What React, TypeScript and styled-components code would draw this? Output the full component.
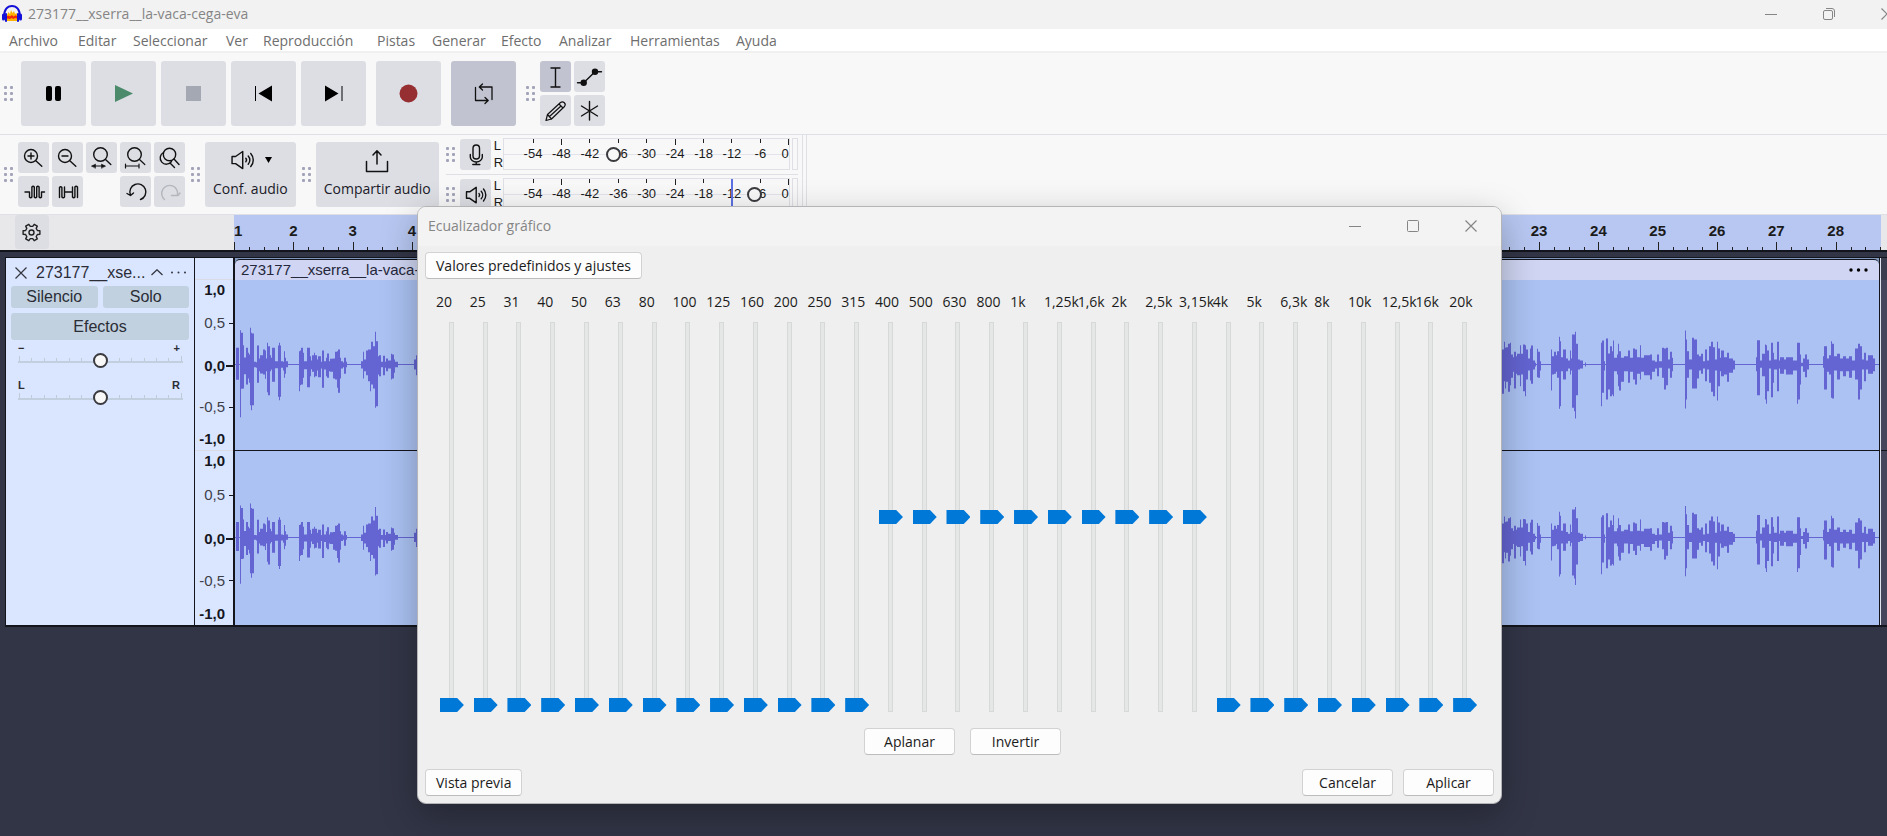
import React, { useState } from 'react';
import styled, { createGlobalStyle, css } from 'styled-components';

const UI = `"Open Sans", "Noto Sans", sans-serif`;
const ARIAL = `"Liberation Sans", Arial, sans-serif`;

const Global = createGlobalStyle`
  *, *::before, *::after { box-sizing: border-box; }
  body { margin: 0; background: #323546; }
  button { font: inherit; color: inherit; border: 0; padding: 0; margin: 0; background: none; }
  svg { display: block; }
`;

const Page = styled.div`
  position: relative;
  display: flex;
  flex-direction: column;
  min-height: 100vh;
  overflow: hidden;
  font-family: ${UI};
  font-size: 14px;
  color: #1b1b1b;
  background: #323546;
`;

/* ---------- window frame ---------- */

const TitleBar = styled.header`
  display: flex;
  align-items: center;
  height: 29px;
  padding: 0 0 2px 2px;
  background: #f2f2f2;
  color: #858585;
  overflow: hidden;
`;
const WindowTitle = styled.h1`
  flex: 1;
  margin: 0 0 0 6px;
  font-size: 14px;
  font-weight: 400;
  line-height: 20px;
  white-space: nowrap;
`;
const WindowButtons = styled.div<{ $bleed?: boolean }>`
  display: flex;
  margin-right: ${(p) => (p.$bleed ? '-29px' : '1px')};
`;
const WindowButton = styled.button`
  display: grid;
  place-items: center;
  width: 58px;
  height: 29px;
`;
const MenuBar = styled.nav`
  display: grid;
  grid-template-columns: 69px 55px 93px 37px 114px 55px 69px 58px 71px 106px 60px;
  height: 24px;
  padding-left: 9px;
  border-bottom: 2px solid #f0f0f0;
  background: #fff;
  color: #6e6e6e;
`;
const MenuItem = styled.button`
  font-size: 14px;
  line-height: 24px;
  text-align: left;
  white-space: nowrap;
`;

/* ---------- toolbars ---------- */

const Toolbar = styled.div<{ $height: number; $gap: number }>`
  display: flex;
  align-items: center;
  gap: ${(p) => p.$gap}px;
  height: ${(p) => p.$height}px;
  padding-left: 4px;
  border-bottom: 1px solid #dfe0e5;
  background: #f8f8f8;
`;
const Group = styled.div<{ $gap: number }>`
  display: flex;
  align-items: center;
  gap: ${(p) => p.$gap}px;
`;
const GripBox = styled.span`
  display: grid;
  grid-template-columns: 3px 3px;
  gap: 3px;
  width: 9px;
  i {
    width: 3px;
    height: 3px;
    border-radius: 1px;
    background: #a3a4b9;
  }
`;
const ToolGrid = styled.div<{ $cols: number }>`
  display: grid;
  grid-template-columns: repeat(${(p) => p.$cols}, 31px);
  grid-auto-rows: 31px;
  gap: 3px;
`;
const face = css<{ $active?: boolean }>`
  border-radius: 3px;
  background: ${(p) => (p.$active ? '#c1c3d0' : '#dddee4')};
`;
const TransportButton = styled.button<{ $active?: boolean }>`
  ${face}
  width: 65px;
  height: 65px;
`;
const ToolButton = styled.button<{ $active?: boolean }>`
  ${face}
  width: 31px;
  height: 31px;
`;
const LabelledButton = styled.button`
  ${face}
  display: flex;
  flex-direction: column;
  align-items: center;
  justify-content: space-between;
  height: 65px;
  padding: 7px 8px 8px;
  font-size: 14px;
  line-height: 20px;
  color: #1a1a28;
  white-space: nowrap;
`;
const IconLine = styled.span`
  display: flex;
  align-items: center;
  gap: 9px;
`;

/* ---------- level meters ---------- */

const Meters = styled.div`
  align-self: stretch;
  display: flex;
  flex-direction: column;
  margin-left: 1px;
  padding-right: 4px;
  border-right: 1px solid #dfe0e5;
  box-shadow: 3px 0 0 #f8f8f8, 4px 0 0 #dfe0e5;
`;
const MeterRow = styled.div`
  display: flex;
  align-items: center;
  flex: 1;
  gap: 5px;
  padding-bottom: 1px;
  & + & { border-top: 1px solid #dfe0e5; }
`;
const MeterBody = styled.div`
  display: flex;
  gap: 2px;
  margin-left: -2px;
`;
const Channels = styled.div`
  display: flex;
  flex-direction: column;
  justify-content: space-between;
  width: 7px;
  height: 32px;
  font-family: ${ARIAL};
  font-size: 13px;
  line-height: 15px;
`;
const MeterScale = styled.div`
  position: relative;
  display: flex;
  width: 287px;
  height: 32px;
  padding-left: 15px;
  border: 1px solid #dfe0e5;
  background: linear-gradient(#e3e4e9, #e3e4e9) 0 15px / 100% 1px no-repeat;
`;
const MeterMark = styled.span<{ $major?: boolean; $end?: boolean }>`
  display: flex;
  flex-direction: column;
  align-items: ${(p) => (p.$end ? 'flex-end' : 'center')};
  flex: ${(p) => (p.$end ? 1 : 2)} 0 0;
  font-family: ${ARIAL};
  font-size: 13px;
  line-height: 18px;
  &::before {
    content: '';
    width: 1px;
    height: ${(p) => (p.$major ? 6 : 4)}px;
    margin-bottom: ${(p) => (p.$major ? 0 : 2)}px;
    background: #222;
  }
`;
const ClipLight = styled.span`
  width: 6px;
  height: 32px;
  border: 1px solid #dfe0e5;
`;
const Peak = styled.span`
  position: absolute;
  top: 0;
  left: 227px;
  width: 2px;
  height: 30px;
  background: #5d70e2;
`;
const knob = css`
  appearance: none;
  width: 15px;
  height: 15px;
  border: 2px solid #3a3a3f;
  border-radius: 50%;
  background: #f8f8f8;
`;
const MeterKnob = styled.input`
  position: absolute;
  inset: 0;
  width: 100%;
  height: 100%;
  margin: 0;
  appearance: none;
  background: transparent;
  &::-webkit-slider-thumb { ${knob} }
`;

/* ---------- timeline ---------- */

const RulerRow = styled.div`
  display: flex;
  height: 37px;
  border-bottom: 2px solid #14151c;
  background: #e8e8ea;
  overflow: hidden;
`;
const RulerHead = styled.div`
  flex: none;
  width: 234px;
  padding-left: 15px;
`;
const GearButton = styled.button`
  ${face}
  width: 34px;
  height: 34px;
`;
const Selection = styled.div`
  flex: 1;
  margin-right: 6px;
  background: #b7c7f1;
`;
const Seconds = styled.div`
  display: grid;
  grid-template-columns: repeat(28, 1fr);
  width: calc(100% + 14px);
  height: 100%;
`;
const Second = styled.div`
  display: flex;
  flex-direction: column;
  justify-content: flex-end;
  font-family: ${ARIAL};
  font-size: 15px;
  font-weight: 700;
  line-height: 20px;
  span {
    width: 24px;
    margin: 0 0 1px -12px;
    text-align: center;
  }
  &:first-child span {
    margin-left: 0;
    text-align: left;
  }
`;
const Quarters = styled.div`
  display: flex;
  align-items: flex-end;
  height: 8px;
  i {
    flex: 1;
    height: 3px;
    border-left: 1px solid #222;
  }
  i:first-child { height: 8px; }
`;

/* ---------- track ---------- */

const Track = styled.section`
  display: flex;
  margin: 5px 0 0 5px;
  border: solid #14151c;
  border-width: 1px 0 2px 1px;
  font-family: ${ARIAL};
`;
const Panel = styled.div`
  flex: none;
  display: flex;
  flex-direction: column;
  gap: 5px;
  width: 189px;
  padding: 6px 5px 0 5px;
  border-right: 1px solid #14151c;
  background: #dae6ff;
  color: #2b2d36;
  font-size: 16px;
`;
const PanelHead = styled.div`
  display: flex;
  align-items: center;
  height: 17px;
  line-height: 18px;
`;
const CloseTrack = styled.button`
  width: 12px;
  margin: 0 9px 0 4px;
`;
const TrackName = styled.span`
  flex: 1;
  white-space: nowrap;
`;
const PanelMenu = styled.button`
  margin-right: 2px;
  & + & { margin-left: 5px; }
`;
const PanelRow = styled.div`
  display: flex;
  gap: 5px;
`;
const PanelButton = styled.button<{ $tall?: boolean }>`
  flex: 1;
  height: ${(p) => (p.$tall ? 27 : 22)}px;
  border-radius: 3px;
  background: #c1d1df;
  line-height: 22px;
`;
const SliderBox = styled.label`
  display: block;
  position: relative;
  margin: -3px 6px 3px 7px;
  height: 32px;
  font-size: 11px;
  line-height: 12px;
`;
const SliderEnds = styled.span`
  display: flex;
  justify-content: space-between;
  padding: 0 3px 0 0;
  font-weight: 700;
`;
const SliderTicks = styled.span`
  display: flex;
  justify-content: space-between;
  height: 7px;
  margin-top: 2px;
  padding: 0 1px;
  border-bottom: 2px solid #c1cfde;
  i {
    width: 1px;
    height: 3px;
    margin-top: 2px;
    background: #c1cbd8;
  }
  i:first-child, i:last-child { height: 5px; margin-top: 0; }
`;
const PanelSlider = styled.input`
  position: absolute;
  left: 0;
  top: 10px;
  width: 100%;
  height: 16px;
  margin: 0;
  appearance: none;
  background: transparent;
  &::-webkit-slider-thumb { ${knob} }
`;
const ScaleColumn = styled.div`
  flex: none;
  width: 40px;
  padding-top: 21px;
  border-right: 2px solid #14151c;
  background: #dae6ff;
`;
const Scale = styled.div<{ $height: number }>`
  display: grid;
  grid-template-rows: 20fr 46fr 40fr 42fr 22fr;
  height: ${(p) => p.$height}px;
  border-top: 1px solid #d9dce6;
`;
const ScaleMark = styled.span<{ $bold?: boolean; $tick: number }>`
  display: flex;
  align-items: center;
  justify-content: flex-end;
  gap: ${(p) => 8 - p.$tick}px;
  font-size: 15px;
  line-height: 18px;
  font-weight: ${(p) => (p.$bold ? 700 : 400)};
  color: ${(p) => (p.$bold ? '#16161e' : '#3d4049')};
  &::after {
    content: '';
    width: ${(p) => p.$tick}px;
    height: ${(p) => (p.$bold ? 2 : 1)}px;
    background: #16161e;
  }
`;
const Clip = styled.div`
  flex: 1;
  min-width: 0;
  padding-top: 1px;
  border-right: 1px solid #14151c;
  background: #7f98bc;
`;
const ClipHead = styled.div`
  display: flex;
  align-items: center;
  justify-content: space-between;
  height: 21px;
  padding: 0 11px 0 6px;
  border-top: 1px solid #14151c;
  border-radius: 5px 5px 0 0;
  background: #cfd5f2;
  font-size: 15px;
  line-height: 20px;
  color: #25273a;
`;
const WaveBox = styled.div<{ $height: number }>`
  height: ${(p) => p.$height}px;
  overflow: hidden;
  background: #abc2f2;
  & + & { border-top: 1px solid #14151c; }
`;
const Tail = styled.div`
  flex: none;
  width: 7px;
  border-left: 1px solid #dfe3f0;
  background: linear-gradient(#14151c, #14151c) 0 192px / 100% 1px no-repeat,
    linear-gradient(#3c3e50 22px, #45465c 22px);
`;

/* ---------- equalizer dialog ---------- */

const Dialog = styled.section`
  position: absolute;
  left: 417px;
  top: 206px;
  width: 1085px;
  border: 1px solid #b4b4b6;
  border-radius: 9px;
  background: #efefef;
  box-shadow: 0 12px 36px rgba(0, 0, 0, 0.28);
  overflow: hidden;
`;
const DialogTitle = styled.header`
  display: flex;
  align-items: center;
  justify-content: space-between;
  height: 39px;
  padding: 0 0 2px 10px;
  background: #f3f3f3;
  color: #858585;
  h2 {
    margin: 0;
    font-size: 14px;
    font-weight: 400;
    line-height: 20px;
  }
`;
const DialogBody = styled.div`
  display: flex;
  flex-direction: column;
  padding: 6px 7px 7px;
`;
const PushButton = styled.button<{ $fit?: boolean }>`
  height: 27px;
  ${(p) => (p.$fit ? 'padding: 0 10px; align-self: flex-start;' : 'width: 91px;')}
  border: 1px solid #d2d2d2;
  border-bottom-color: #bcbcbc;
  border-radius: 4px;
  background: #fdfdfd;
  font-size: 14px;
  line-height: 24px;
  white-space: nowrap;
`;
const Bands = styled.div`
  display: grid;
  grid-template-columns: repeat(31, 1fr);
  margin: 13px 12px 0 10px;
`;
const Band = styled.label`
  display: flex;
  flex-direction: column;
  min-width: 0;
  font-size: 14px;
  line-height: 20px;
  white-space: nowrap;
  span { padding-left: 1px; }
`;
const BandSlider = styled.input`
  align-self: center;
  writing-mode: vertical-lr;
  direction: rtl;
  appearance: none;
  width: 24px;
  height: 390px;
  margin: 10px 0 0;
  background: transparent;
  &::-webkit-slider-runnable-track {
    width: 24px;
    height: 100%;
    background:
      linear-gradient(#e4e7e6, #e4e7e6) 10px 1px / 3px 388px no-repeat,
      linear-gradient(#d6d9d8, #d6d9d8) 9px 0 / 5px 100% no-repeat;
  }
  &::-webkit-slider-thumb {
    appearance: none;
    width: 24px;
    height: 14px;
    background: #0078d7;
    clip-path: polygon(0 0, 72% 0, 100% 50%, 72% 100%, 0 100%);
  }
`;
const CurveActions = styled.div`
  display: flex;
  justify-content: center;
  gap: 15px;
  margin: 16px 0 14px 6px;
`;
const DialogActions = styled.div`
  display: flex;
  gap: 10px;
  button:first-child { margin-right: auto; }
`;

/* ---------- icons ---------- */

const Icon = ({ size = 31, color = '#111', w = 1.4, children }: {
  size?: number; color?: string; w?: number; children: React.ReactNode;
}) => (
  <svg width={size} height={size} viewBox={`0 0 ${size} ${size}`} fill="none" stroke={color} strokeWidth={w}
    strokeLinecap="round" strokeLinejoin="round" aria-hidden="true">
    {children}
  </svg>
);

const speaker = (
  <>
    <path d="M6.500 12.800h3.200l6.500-4.500v15.500l-6.500-4.500H6.500z" />
    <path d="M19 14.500a2.200 2.200 0 0 1 0 3M21.200 12.300a5.500 5.500 0 0 1 0 7.500M23.500 10a9 9 0 0 1 0 12" />
  </>
);

const gearPath = () => {
  const pts: string[] = [];
  for (let i = 0; i < 6; i++) {
    [[-19, 6.2], [-12, 8.6], [12, 8.6], [19, 6.2]].forEach(([a, r]) => {
      const t = ((i * 60 + a) * Math.PI) / 180;
      pts.push(`${(16.5 + r * Math.cos(t)).toFixed(1)} ${(16.5 + r * Math.sin(t)).toFixed(1)}`);
    });
  }
  return `M${pts.join('L')}Z`;
};

const Logo = () => (
  <svg width="20" height="20" viewBox="0 0 20 20" aria-hidden="true">
    <path d="M4.500 17v-5l2-4 1.500 2 1-4 1.500 3 1.500-2 1 3 1.500-1L15.500 12v5z" fill="#ffb300" />
    <path d="M4.500 12.500l2-1 1.500 1 2-1.500 1.500 1.500 2-1.200 2 1.200-.500 2-2-.500-1.500 1-2-1-1.500 1-3-.500z" fill="#f4260c" />
    <path d="M2.300 12.500C1.800 5.500 5.500 2 10 2s8.200 3.500 7.700 10.500" fill="none" stroke="#1410d8" strokeWidth="2" />
    <rect x="0" y="9.500" width="3" height="7" rx="1.500" fill="#1410d8" />
    <rect x="17" y="9.500" width="3" height="7" rx="1.500" fill="#1410d8" />
    <rect x="3" y="9" width="2" height="9" rx="1" fill="#1410d8" />
    <rect x="15" y="9" width="2" height="9" rx="1" fill="#1410d8" />
  </svg>
);

const Minimize = () => (
  <svg width="12" height="12" stroke="#858585" fill="none"><path d="M0 6.500h12" /></svg>
);
const Cross = ({ color = '#858585' }: { color?: string }) => (
  <svg width="12" height="12" stroke={color} fill="none" strokeWidth="1.200"><path d="M.5.5l11 11M11.500.5l-11 11" /></svg>
);

const Grip = () => (
  <GripBox aria-hidden="true"><i /><i /><i /><i /><i /><i /></GripBox>
);

/* ---------- data ---------- */

const MENU = ['Archivo', 'Editar', 'Seleccionar', 'Ver', 'Reproducción', 'Pistas', 'Generar', 'Efecto', 'Analizar', 'Herramientas', 'Ayuda'];
const DB = ['-54', '-48', '-42', '-36', '-30', '-24', '-18', '-12', '-6', '0'];
const BANDS = ['20', '25', '31', '40', '50', '63', '80', '100', '125', '160', '200', '250', '315', '400', '500', '630', '800', '1k',
  '1,25k', '1,6k', '2k', '2,5k', '3,15k', '4k', '5k', '6,3k', '8k', '10k', '12,5k', '16k', '20k'];

/* Peaks as start, end, height above and depth below the axis, in thirds of a pixel. */
const OPENING = '33 41 50 46,45 49 103 158,49 53 95 73,53 56 58 72,56 64 21 29,64 68 50 60,68 71 35 42,71 75 30 55,75 79 110 122,79 82 95 137,82 86 93 122,86 92 8 8,92 97 7 10,97 101 57 55,101 105 18 20,105 115 28 27,115 119 45 30,119 123 42 43,123 126 18 20,126 130 65 83,130 134 55 92,134 138 28 20,138 142 20 15,142 149 50 52,149 158 10 11,158 162 57 97,162 166 65 107,166 169 57 97,169 175 10 10,175 177 8 18,177 181 40 40,181 184 20 28,184 188 10 8,221 225 40 80,225 229 42 62,229 235 50 60,235 238 35 40,238 247 10 14,247 254 50 68,254 257 25 35,257 261 12 14,261 266 28 22,266 271 35 38,271 275 28 35,275 280 15 18,280 287 25 38,287 292 8 12,292 297 42 70,297 302 10 15,302 306 20 35,306 311 33 40,311 316 10 20,316 324 17 22,324 330 18 42,330 335 38 45,335 339 40 70,339 345 45 85,345 349 20 42,349 354 10 12,354 357 6 8,357 362 20 28,362 367 8 8,409 413 10 12,413 417 38 42,417 423 15 20,423 428 42 32,428 435 45 50,435 439 45 80,439 443 68 60,443 449 55 72,449 453 98 130,453 458 70 125,458 462 25 30,462 469 28 35,469 473 8 8,473 480 26 32,480 484 8 10,484 490 18 20,490 497 12 12,497 502 32 45,502 507 30 42,507 511 15 25,511 518 8 8,566 572 15 15,572 580 28 32';
const ENDING = '60 67 40 60,67 71 45 88,71 75 68 50,75 79 50 72,79 83 52 52,83 91 62 82,91 94 65 62,94 98 30 40,98 102 22 22,102 107 38 72,107 112 25 28,112 120 32 32,120 124 58 65,124 130 32 30,130 134 60 80,134 139 58 95,139 145 45 45,145 149 18 18,149 153 48 48,153 159 57 58,159 164 12 15,164 168 5 6,171 175 47 38,175 179 38 40,179 184 10 18,213 217 45 78,217 222 25 30,222 228 38 28,228 232 28 22,232 236 40 40,236 240 83 133,240 244 70 125,244 250 22 20,250 257 45 45,257 263 18 20,263 270 12 12,270 274 42 30,274 277 18 18,277 281 90 130,281 285 90 140,285 289 98 162,289 293 62 92,293 300 15 15,300 308 12 12,315 318 6 6,363 367 65 125,367 371 72 85,371 375 10 18,377 383 78 105,383 389 33 75,389 395 55 95,395 399 40 90,399 403 72 95,403 410 20 20,410 415 30 30,415 418 62 65,418 424 40 78,424 431 20 52,431 445 25 20,445 449 42 55,449 460 20 22,460 466 48 45,466 471 45 60,471 479 22 28,479 484 58 45,484 492 20 22,492 510 28 32,510 517 30 45,517 524 12 22,524 532 8 12,532 537 30 35,537 546 10 10,546 551 50 40,551 557 48 75,557 565 50 62,565 569 15 12,569 575 38 40,575 580 20 20,614 618 102 132,618 622 75 105,622 626 40 40,626 637 15 15,637 642 80 72,642 650 75 72,650 656 30 42,656 662 25 18,662 670 32 28,670 675 10 12,675 681 45 50,681 686 12 15,686 692 55 55,692 699 68 82,699 706 52 95,706 711 15 18,711 715 68 108,715 719 48 65,719 724 20 20,724 732 42 35,732 740 22 30,740 748 35 52,748 758 18 25,758 765 12 15,828 832 22 20,832 839 73 92,839 846 12 10,846 854 32 35,854 858 60 105,858 862 58 118,862 867 42 80,867 874 12 12,874 878 65 98,878 882 35 55,882 890 15 15,890 896 68 80,896 901 12 12,901 911 22 28,911 918 15 15,918 938 22 30,938 951 12 18,951 955 65 118,955 959 65 105,959 964 30 60,964 970 5 5,970 976 18 22,976 981 30 38,981 986 15 15,1029 1033 25 10,1033 1041 55 75,1041 1046 18 22,1046 1053 28 30,1053 1057 70 100,1057 1062 62 102,1062 1072 25 18,1072 1079 32 45,1079 1090 18 20,1090 1098 25 35,1098 1108 18 20,1108 1115 25 40,1115 1124 12 18,1124 1134 48 45,1134 1140 62 105,1140 1146 55 75,1146 1151 15 15,1151 1157 35 50,1157 1165 12 15,1165 1178 28 28,1178 1184 18 20';

const peaks = (data: string, origin: number, axis: number, up: number, down: number) =>
  data.split(',').map((seg) => {
    const [a, b, u, d] = seg.split(' ').map(Number);
    const x0 = Math.round(origin + a / 3);
    const x1 = Math.max(x0 + 1, Math.round(origin + b / 3));
    return `M${x0} ${(axis - (u * up) / 3).toFixed(1)}H${x1}V${(axis + (d * down) / 3).toFixed(1)}H${x0}Z`;
  }).join('');

const Wave = ({ axis, up = 1, down = 1 }: { axis: number; up?: number; down?: number }) => (
  <svg width="100%" height="100%" aria-hidden="true">
    <rect x="0" y={axis - 0.5} width="100%" height="1" fill="#6464d2" />
    <path d={peaks(OPENING, -10, axis, up, down) + peaks(ENDING, 1245, axis, up, down)} fill="#6464d2" />
  </svg>
);

/* ---------- composed parts ---------- */

const Meter = ({ label, level, peak, icon }: { label: string; level: number; peak?: boolean; icon: React.ReactNode }) => (
  <MeterRow>
    <Grip />
    <ToolButton aria-label={label}><Icon>{icon}</Icon></ToolButton>
    <MeterBody>
      <Channels><span>L</span><span>R</span></Channels>
      <MeterScale>
        {DB.map((d) => (
          <MeterMark key={d} $major={['-48', '-24', '0'].includes(d)} $end={d === '0'}>{d}</MeterMark>
        ))}
        {peak && <Peak />}
        <MeterKnob type="range" aria-label={`Nivel: ${label}`} min={0} max={1000} defaultValue={level} />
      </MeterScale>
      <ClipLight />
    </MeterBody>
  </MeterRow>
);

const TrackSlider = ({ name, low, high }: { name: string; low: string; high: string }) => (
  <SliderBox>
    <SliderEnds><span>{low}</span><span>{high}</span></SliderEnds>
    <SliderTicks>{Array.from({ length: 14 }, (_, i) => <i key={i} />)}</SliderTicks>
    <PanelSlider type="range" aria-label={name} defaultValue={50} />
  </SliderBox>
);

const VerticalScale = ({ height }: { height: number }) => (
  <Scale $height={height}>
    <ScaleMark $bold $tick={0}>1,0</ScaleMark>
    <ScaleMark $tick={4}>0,5</ScaleMark>
    <ScaleMark $bold $tick={7}>0,0</ScaleMark>
    <ScaleMark $tick={4}>-0,5</ScaleMark>
    <ScaleMark $bold $tick={0}>-1,0</ScaleMark>
  </Scale>
);

const Equalizer = () => {
  const [gains, setGains] = useState(() => BANDS.map((_, i) => (i >= 13 && i <= 22 ? 0 : -20)));
  return (
    <Dialog role="dialog" aria-labelledby="eq-title">
      <DialogTitle>
        <h2 id="eq-title">Ecualizador gráfico</h2>
        <WindowButtons>
          <WindowButton aria-label="Minimizar"><Minimize /></WindowButton>
          <WindowButton aria-label="Maximizar">
            <svg width="12" height="12" fill="none" stroke="#858585"><rect x=".5" y=".5" width="11" height="11" rx="1" /></svg>
          </WindowButton>
          <WindowButton aria-label="Cerrar"><Cross /></WindowButton>
        </WindowButtons>
      </DialogTitle>
      <DialogBody>
        <PushButton $fit>Valores predefinidos y ajustes</PushButton>
        <Bands>
          {BANDS.map((b, i) => (
            <Band key={b}>
              <span>{b}</span>
              <BandSlider type="range" min={-20} max={20} value={gains[i]}
                onChange={(e) => setGains(gains.map((g, j) => (j === i ? Number(e.target.value) : g)))} />
            </Band>
          ))}
        </Bands>
        <CurveActions>
          <PushButton onClick={() => setGains(gains.map(() => 0))}>Aplanar</PushButton>
          <PushButton onClick={() => setGains(gains.map((g) => -g))}>Invertir</PushButton>
        </CurveActions>
        <DialogActions>
          <PushButton $fit>Vista previa</PushButton>
          <PushButton>Cancelar</PushButton>
          <PushButton>Aplicar</PushButton>
        </DialogActions>
      </DialogBody>
    </Dialog>
  );
};

export default function App() {
  return (
    <>
      <Global />
      <Page>
        <TitleBar>
          <Logo />
          <WindowTitle>273177__xserra__la-vaca-cega-eva</WindowTitle>
          <WindowButtons $bleed>
            <WindowButton aria-label="Minimizar"><Minimize /></WindowButton>
            <WindowButton aria-label="Restaurar">
              <svg width="12" height="12" fill="none" stroke="#858585">
                <rect x=".5" y="2.500" width="9" height="9" rx="1.500" />
                <path d="M3 .5h6a2.500 2.500 0 0 1 2.500 2.500v6" />
              </svg>
            </WindowButton>
            <WindowButton aria-label="Cerrar"><Cross /></WindowButton>
          </WindowButtons>
        </TitleBar>

        <MenuBar>{MENU.map((m) => <MenuItem key={m}>{m}</MenuItem>)}</MenuBar>

        <Toolbar $height={82} $gap={10}>
          <Group $gap={8}>
            <Grip />
            <Group $gap={10}>
              <Group $gap={5}>
                <TransportButton aria-label="Pausa">
                  <svg width="65" height="65"><rect x="25" y="25" width="6" height="15" rx="2" /><rect x="34" y="25" width="6" height="15" rx="2" /></svg>
                </TransportButton>
                <TransportButton aria-label="Reproducir">
                  <svg width="65" height="65"><path d="M24 24L42 32.500 24 41z" fill="#4b8a6a" /></svg>
                </TransportButton>
                <TransportButton aria-label="Detener">
                  <svg width="65" height="65"><rect x="25" y="25" width="15" height="15" fill="#a4a8b2" /></svg>
                </TransportButton>
                <TransportButton aria-label="Ir al inicio">
                  <svg width="65" height="65"><path d="M24 25h1v15h-1zM41 24.500v16L27.500 32.500z" /></svg>
                </TransportButton>
                <TransportButton aria-label="Ir al final">
                  <svg width="65" height="65"><path d="M40.500 25h1v15h-1zM24 24.500v16L37.500 32.500z" /></svg>
                </TransportButton>
              </Group>
              <TransportButton aria-label="Grabar">
                <svg width="65" height="65"><circle cx="32.500" cy="32.500" r="9" fill="#952f31" /></svg>
              </TransportButton>
              <TransportButton $active aria-label="Bucle">
                <Icon size={65} w={1.3}>
                  <path d="M24.500 26.500V39.500H37M34 36.500l3.200 3L34 42.500M41 38.500V26H28.500M31.500 23l-3.200 3 3.200 3" />
                </Icon>
              </TransportButton>
            </Group>
          </Group>
          <Group $gap={5}>
            <Grip />
            <ToolGrid $cols={2}>
              <ToolButton $active aria-label="Selección"><Icon><path d="M11 7h9M15.500 7v19M11 26h9" /></Icon></ToolButton>
              <ToolButton aria-label="Envolvente">
                <Icon>
                  <path d="M3.500 21.700h6.200L21 10.700h6.500" />
                  <circle cx="9.700" cy="21.700" r="2.500" fill="#111" /><circle cx="21" cy="10.700" r="2.500" fill="#111" />
                </Icon>
              </ToolButton>
              <ToolButton aria-label="Dibujo">
                <Icon w={1.2}><path d="M6 25.500l1.500-6L20.500 7.500q2-1.500 3.800.2t.2 3.800L11.500 24zM7.500 19.500l4 4.500M19 9l4 4M9.500 21.500L21 11" /></Icon>
              </ToolButton>
              <ToolButton aria-label="Multiherramienta"><Icon><path d="M15.500 6.500v18.500M7.500 11l16 10M23.500 11l-16 10" /></Icon></ToolButton>
            </ToolGrid>
          </Group>
        </Toolbar>

        <Toolbar $height={80} $gap={6}>
          <Group $gap={5}>
            <Grip />
            <ToolGrid $cols={5}>
              <ToolButton aria-label="Acercar"><Icon><circle cx="13" cy="14" r="6.500" /><path d="M10 14h6M13 11v6M17.800 18.800l6 5.500" /></Icon></ToolButton>
              <ToolButton aria-label="Alejar"><Icon><circle cx="13" cy="14" r="6.500" /><path d="M10 14h6M17.800 18.800l6 5.500" /></Icon></ToolButton>
              <ToolButton aria-label="Ajustar la selección">
                <Icon>
                  <circle cx="14.500" cy="12.500" r="6.800" /><path d="M19.500 17.500l5.300 5" />
                  <path d="M6 24h13" strokeWidth="1.200" />
                  <path d="M6 24l3.500-2v4zM19 24l-3.500-2v4z" strokeWidth="0.500" fill="#111" />
                </Icon>
              </ToolButton>
              <ToolButton aria-label="Ajustar el proyecto">
                <Icon><circle cx="14.500" cy="12.500" r="6.800" /><path d="M19.500 17.500l5.300 5M5.500 24h13.500M5.500 22v4M19 22v4" strokeWidth="1.200" /></Icon>
              </ToolButton>
              <ToolButton aria-label="Alternar zoom">
                <Icon><circle cx="15.500" cy="12.500" r="6.200" /><path d="M20 17l5 5.500M9.500 10.500a6.200 6.200 0 1 0 8 9M16 21l4.500 4.500" /></Icon>
              </ToolButton>
              <ToolButton aria-label="Recortar">
                <Icon><path d="M7 16h4.500v5q1.200 1.500 2.400 0v-10q1.200-1.500 2.400 0v10q1.200 1.500 2.400 0v-10q1.200-1.500 2.400 0v10q1.200 1.500 2.400 0V16h3" /></Icon>
              </ToolButton>
              <ToolButton aria-label="Silenciar">
                <Icon><path d="M7.500 21.500v-10q1.200-1.500 2.400 0v9.500q1.200 1.500 2.600 0v-10M12.500 16h8M20.500 11v10q1.200 1.500 2.400 0v-10q1.200-1.500 2.600 0v10.500" /></Icon>
              </ToolButton>
              <span />
              <ToolButton aria-label="Deshacer"><Icon><path d="M20.500 23.500A8 8 0 1 0 10.500 19M7 17.500l3.500 2 3-2.500" /></Icon></ToolButton>
              <ToolButton aria-label="Rehacer"><Icon color="#b3b6bd"><path d="M10.500 23.500A8 8 0 1 1 23.500 19M17.500 19.500h6.500l2-2.500" /></Icon></ToolButton>
            </ToolGrid>
          </Group>
          <Group $gap={5}>
            <Grip />
            <LabelledButton>
              <IconLine>
                <svg width="27" height="22" viewBox="5.500 6 21 20" fill="none" stroke="#111" strokeWidth="1.300" strokeLinejoin="round" strokeLinecap="round">{speaker}</svg>
                <svg width="7" height="6"><path d="M0 0h7L3.500 6z" /></svg>
              </IconLine>
              Conf. audio
            </LabelledButton>
          </Group>
          <Group $gap={5}>
            <Grip />
            <LabelledButton>
              <svg width="24" height="24" fill="none" stroke="#111" strokeWidth="1.500" strokeLinecap="round" strokeLinejoin="round">
                <path d="M1.500 12.500v10h21v-10M12 15V2M8 6l4-4.200L16 6" />
              </svg>
              Compartir audio
            </LabelledButton>
          </Group>
          <Meters>
            <Meter label="Grabación" level={379}
              icon={<><rect x="13" y="6" width="6.500" height="14" rx="3.200" /><path d="M10.300 15.500v2.500a6 5 0 0 0 12 0v-2.500M16.200 23v2.500M12.800 25.500h7" /></>} />
            <Meter label="Reproducción" level={900} peak icon={speaker} />
          </Meters>
        </Toolbar>

        <RulerRow>
          <RulerHead>
            <GearButton aria-label="Opciones de línea de tiempo">
              <Icon size={33} color="#222"><path d={gearPath()} /><circle cx="16.500" cy="16.500" r="2.500" /></Icon>
            </GearButton>
          </RulerHead>
          <Selection>
            <Seconds>
              {Array.from({ length: 28 }, (_, i) => i + 1).map((s) => (
                <Second key={s}><span>{s}</span><Quarters><i /><i /><i /><i /></Quarters></Second>
              ))}
            </Seconds>
          </Selection>
        </RulerRow>

        <Track>
          <Panel>
            <PanelHead>
              <CloseTrack aria-label="Cerrar pista"><Cross color="#33363f" /></CloseTrack>
              <TrackName>273177__xse...</TrackName>
              <PanelMenu aria-label="Contraer">
                <svg width="12" height="7" fill="none" stroke="#33363f" strokeWidth="1.300"><path d="M.5 6L6 .8 11.500 6" /></svg>
              </PanelMenu>
              <PanelMenu aria-label="Menú de la pista">
                <svg width="17" height="3" fill="#33363f"><circle cx="2" cy="1.500" r="1" /><circle cx="8.500" cy="1.500" r="1" /><circle cx="15" cy="1.500" r="1" /></svg>
              </PanelMenu>
            </PanelHead>
            <PanelRow>
              <PanelButton>Silencio</PanelButton>
              <PanelButton>Solo</PanelButton>
            </PanelRow>
            <PanelRow><PanelButton $tall>Efectos</PanelButton></PanelRow>
            <TrackSlider name="Volumen" low="−" high="+" />
            <TrackSlider name="Panorama" low="L" high="R" />
          </Panel>
          <ScaleColumn>
            <VerticalScale height={171} />
            <VerticalScale height={175} />
          </ScaleColumn>
          <Clip>
            <ClipHead>
              <span>273177__xserra__la-vaca-cega-eva</span>
              <svg width="19" height="4"><circle cx="2" cy="2" r="1.700" /><circle cx="9.500" cy="2" r="1.700" /><circle cx="17" cy="2" r="1.700" /></svg>
            </ClipHead>
            <WaveBox $height={170}><Wave axis={84.5} /></WaveBox>
            <WaveBox $height={175}><Wave axis={86.5} up={0.93} down={0.88} /></WaveBox>
          </Clip>
          <Tail />
        </Track>

        <Equalizer />
      </Page>
    </>
  );
}
